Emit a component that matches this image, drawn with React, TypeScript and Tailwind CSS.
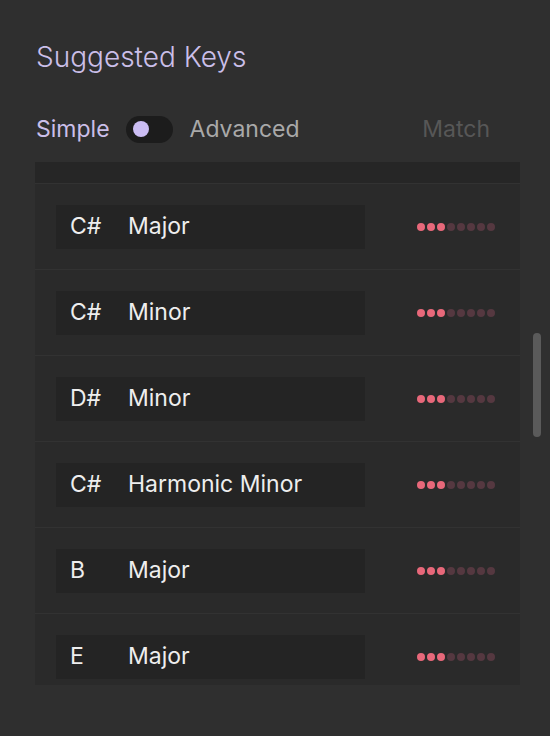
import React from 'react';

const keys = [
  { root: 'C#', mode: 'Major' },
  { root: 'C#', mode: 'Minor' },
  { root: 'D#', mode: 'Minor' },
  { root: 'C#', mode: 'Harmonic Minor' },
  { root: 'B', mode: 'Major' },
  { root: 'E', mode: 'Major' },
];

function MatchDots({ value }: { value: number }) {
  return (
    <div className="flex items-center gap-[2px]">
      {Array.from({ length: 8 }).map((_, i) => (
        <span
          key={i}
          className={`block w-[8px] h-[8px] rounded-full ${i < value ? 'bg-[#e8687a]' : 'bg-[#553840]'}`}
        />
      ))}
    </div>
  );
}

export default function App() {
  return (
    <div
      className="relative w-[550px] h-[736px] bg-[#2f2f2f] overflow-hidden"
      style={{ fontFamily: 'Inter, "Noto Sans", sans-serif' }}
    >
      <div className="pl-[36px] pt-[39px]">
        <h1 className="text-[28px] leading-[36px] font-light text-[#cbbfe9]">Suggested Keys</h1>
      </div>

      <div className="flex items-center h-[28px] mt-[40px] pl-[36px] pr-[60px]">
        <span className="text-[23px] text-[#cbbfe9]">Simple</span>
        <div className="ml-[16px] w-[47px] h-[27px] rounded-full bg-[#1c1c1c] flex items-center pl-[7px]">
          <span className="block w-[16px] h-[16px] rounded-full bg-[#cbbdf3]" />
        </div>
        <span className="ml-[17px] text-[23px] text-[#a9a9a9]">Advanced</span>
        <span className="ml-auto text-[23px] text-[#575757]">Match</span>
      </div>

      <div className="ml-[35px] mt-[19px] w-[485px] h-[523px] bg-[#2a2a2a] overflow-hidden">
        <div className="h-[21px] bg-[#262626]" />
        {keys.map((k, i) => (
          <div key={i} className="h-[86px] border-t border-[#323232] flex items-center pl-[21px] pr-[25px]">
            <div className="w-[309px] h-[44px] bg-[#242424] flex items-center pl-[14px] text-[23px] text-[#eeeeee]">
              <span className="w-[58px]">{k.root}</span>
              <span>{k.mode}</span>
            </div>
            <div className="ml-auto">
              <MatchDots value={3} />
            </div>
          </div>
        ))}
      </div>

      <div className="absolute left-[533px] top-[333px] w-[8px] h-[104px] rounded-full bg-[#5a5a5a]" />
    </div>
  );
}
